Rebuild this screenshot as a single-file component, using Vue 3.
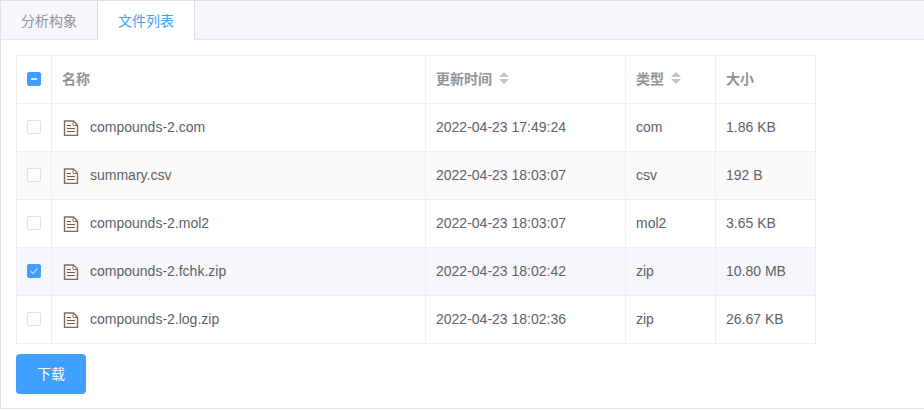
<script setup>
const rows = [
  { name: 'compounds-2.com', time: '2022-04-23 17:49:24', type: 'com', size: '1.86 KB' },
  { name: 'summary.csv', time: '2022-04-23 18:03:07', type: 'csv', size: '192 B', striped: true },
  { name: 'compounds-2.mol2', time: '2022-04-23 18:03:07', type: 'mol2', size: '3.65 KB' },
  { name: 'compounds-2.fchk.zip', time: '2022-04-23 18:02:42', type: 'zip', size: '10.80 MB', checked: true },
  { name: 'compounds-2.log.zip', time: '2022-04-23 18:02:36', type: 'zip', size: '26.67 KB' },
]
</script>

<template>
  <div class="card">
    <div class="tabs">
      <div class="tab">分析构象</div>
      <div class="tab active">文件列表</div>
    </div>
    <div class="body">
      <div class="table">
        <div class="row head">
          <div class="cell c-check"><span class="box on"><span class="dash"></span></span></div>
          <div class="cell c-name"><span class="title">名称</span></div>
          <div class="cell c-time">
            <span class="title">更新时间</span>
            <span class="sort"><i class="up"></i><i class="down"></i></span>
          </div>
          <div class="cell c-type">
            <span class="title">类型</span>
            <span class="sort"><i class="up"></i><i class="down"></i></span>
          </div>
          <div class="cell c-size last"><span class="title">大小</span></div>
        </div>
        <div
          v-for="r in rows"
          :key="r.name"
          class="row"
          :class="{ striped: r.striped, selected: r.checked }"
        >
          <div class="cell c-check">
            <span class="box" :class="{ on: r.checked }">
              <svg v-if="r.checked" width="14" height="14" viewBox="0 0 14 14">
                <path d="M3.6 7.2 L6 9.5 L10.4 4.6" fill="none" stroke="#fff" stroke-width="1" />
              </svg>
            </span>
          </div>
          <div class="cell c-name">
            <svg class="file" width="16" height="16" viewBox="0 0 16 16">
              <path d="M1.5 1 H10.5 L14.5 5 V15.5 H1.5 Z" fill="none" stroke="#86695a" stroke-width="1.4" />
              <path d="M10 1 V5.5 H14.5" fill="none" stroke="#8c7a70" stroke-width="1" />
              <path d="M4 5.5 H8 M4 8.5 H12 M4 11.5 H12" fill="none" stroke="#6a5f5a" stroke-width="1.1" />
            </svg>
            <span>{{ r.name }}</span>
          </div>
          <div class="cell c-time">{{ r.time }}</div>
          <div class="cell c-type">{{ r.type }}</div>
          <div class="cell c-size last">{{ r.size }}</div>
        </div>
      </div>
      <button class="download">下载</button>
    </div>
  </div>
</template>

<style>
html, body { margin: 0; overflow: hidden; background: #fff; }
</style>

<style scoped>
.card {
  box-sizing: border-box;
  width: 930px;
  height: 409px;
  border: 1px solid #dcdfe6;
  background: #fff;
  font-family: "Liberation Sans", "Noto Sans CJK SC", sans-serif;
  font-size: 14px;
  color: #606266;
}
.tabs {
  display: flex;
  box-sizing: border-box;
  height: 39px;
  background: #f5f7fa;
  border-bottom: 1px solid #e4e7ed;
}
.tab {
  box-sizing: border-box;
  width: 97px;
  height: 38px;
  padding: 0 20px;
  line-height: 41px;
  color: #909399;
  border-right: 1px solid #dcdfe6;
}
.tab.active {
  height: 39px;
  background: #fff;
  color: #409eff;
}
.body {
  padding: 15px;
}
.table {
  width: 800px;
  box-sizing: border-box;
  border-top: 1px solid #ebeef5;
  border-left: 1px solid #ebeef5;
}
.row {
  display: flex;
  height: 48px;
  box-sizing: border-box;
  border-bottom: 1px solid #ebeef5;
}
.row.striped { background: #fafafa; }
.row.selected { background: #f5f7fa; }
.cell {
  box-sizing: border-box;
  display: flex;
  align-items: center;
  padding: 0 10px 2px;
  border-right: 1px solid #ebeef5;
  white-space: nowrap;
}
.head .cell { padding-bottom: 3px; }
.c-check { width: 35px; }
.cell.c-check { padding: 0 0 2px 10px; }
.c-name { width: 374px; }
.c-time { width: 200px; }
.c-type { width: 90px; }
.c-size { width: 100px; }
.title { font-weight: 700; color: #909399; }
.box {
  box-sizing: border-box;
  width: 14px;
  height: 14px;
  border: 1px solid #dcdfe6;
  border-radius: 2px;
  background: #fff;
  display: block;
  position: relative;
}
.box.on { background: #409eff; border-color: #409eff; }
.box.on svg { position: absolute; left: -1px; top: -1px; display: block; }
.dash {
  position: absolute;
  left: 3px;
  right: 3px;
  top: 5px;
  height: 2px;
  background: #fff;
  opacity: 0.75;
}
.file { margin: 2px 11px 0 1px; flex: none; }
.sort {
  display: inline-flex;
  flex-direction: column;
  gap: 2px;
  margin-left: 7px;
}
.sort i {
  display: block;
  width: 0;
  height: 0;
  border-left: 5px solid transparent;
  border-right: 5px solid transparent;
}
.sort .up { border-bottom: 5px solid #c0c4cc; }
.sort .down { border-top: 5px solid #c0c4cc; }
.download {
  display: block;
  width: 70px;
  height: 40px;
  margin-top: 10px;
  padding: 0 0 2px;
  border: 0;
  border-radius: 4px;
  background: #409eff;
  color: #fff;
  font: inherit;
}
</style>
